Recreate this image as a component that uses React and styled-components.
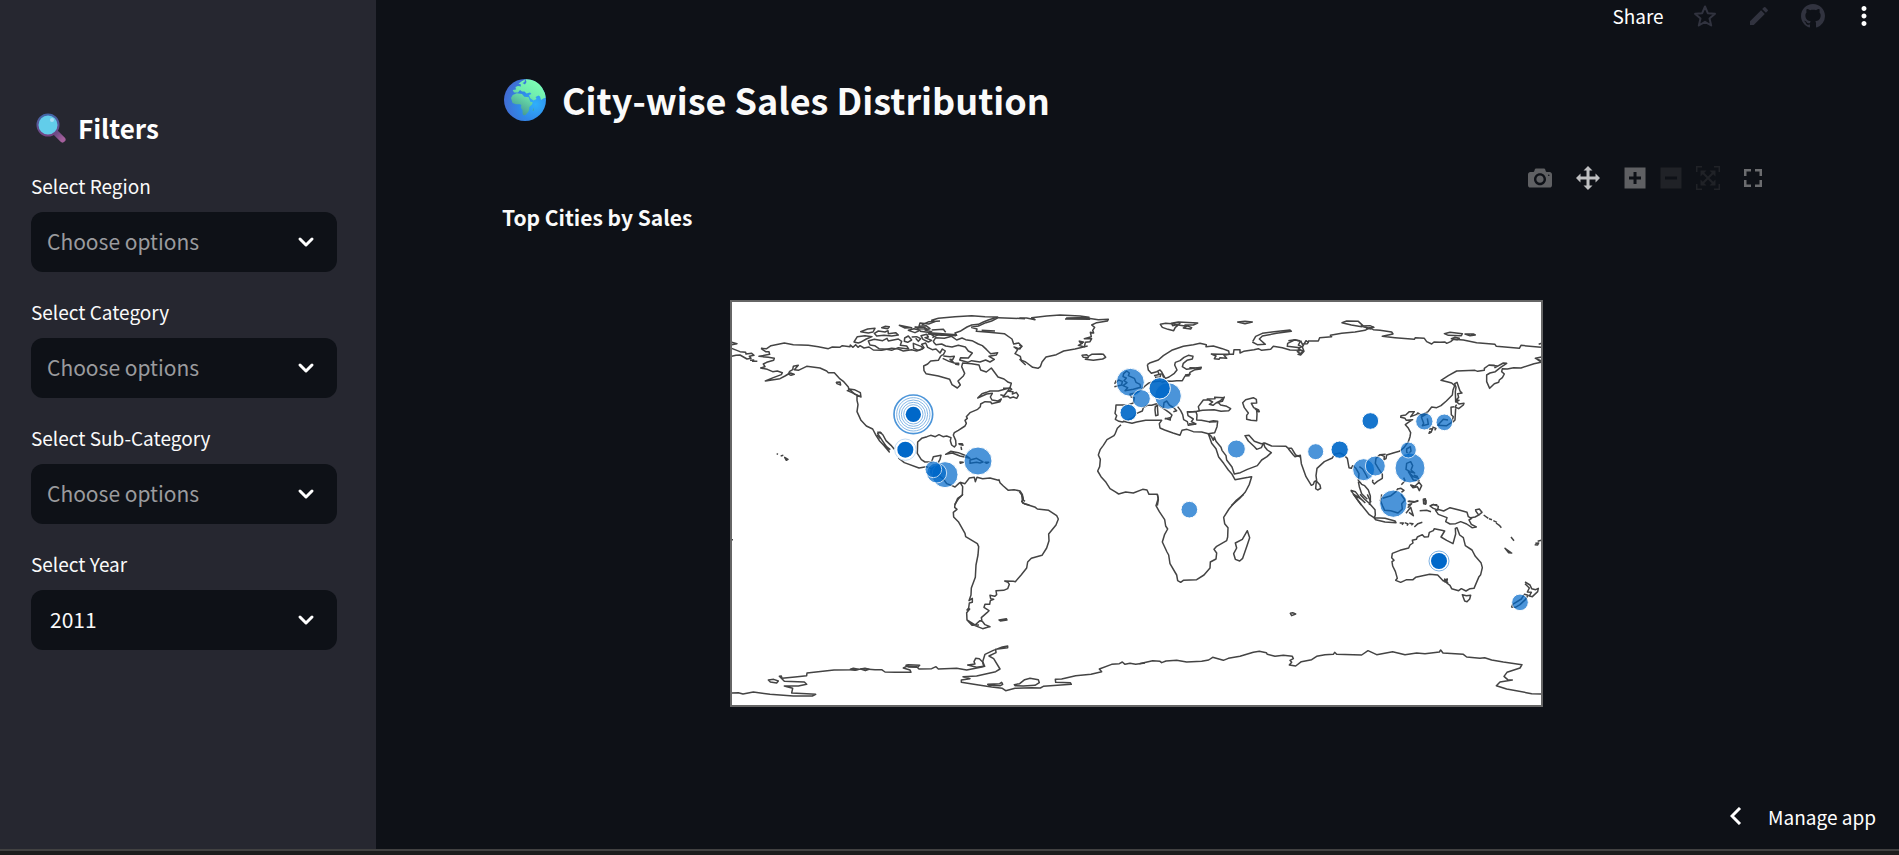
import React from "react";
import styled, { createGlobalStyle } from "styled-components";
import { MdEdit, MdMoreVert } from "react-icons/md";

const GlobalStyle = createGlobalStyle`
  *, *::before, *::after { box-sizing: border-box; }
  body {
    margin: 0;
    background: #0e1117;
    color: #fafafa;
    font-family: "Noto Sans CJK SC", "Noto Sans", sans-serif;
  }
`;

const Shell = styled.div`
  display: flex;
  flex-direction: column;
  min-height: 100vh;
`;

const Workspace = styled.div`
  display: flex;
  flex: 1;
`;

const StatusStrip = styled.div`
  height: 6px;
  background: #1c1c1c;
  border-top: 2px solid #414141;
`;

const Sidebar = styled.aside`
  flex: 0 0 376px;
  padding: 108px 39px 32px 31px;
  background: #262730;
`;

const SidebarTitle = styled.h2`
  display: flex;
  align-items: center;
  gap: 11px;
  margin: 0 0 24px;
  padding-left: 4px;
  font-size: 26px;
  line-height: 40px;
  font-weight: 600;
  color: #fff;
`;

const Field = styled.div`
  display: flex;
  flex-direction: column;
  gap: 12px;
  margin-bottom: 26px;
`;

const FieldLabel = styled.label`
  font-size: 19px;
  line-height: 28px;
  color: #fafafa;
`;

const SelectBox = styled.div`
  display: grid;
  grid-template-columns: 1fr 62px;
  align-items: center;

  svg {
    grid-area: 1 / 2;
    justify-self: center;
    pointer-events: none;
  }
`;

const Select = styled.select`
  grid-area: 1 / 1 / 2 / 3;
  appearance: none;
  width: 100%;
  height: 60px;
  margin: 0;
  padding: 0 60px 2px ${(p) => (p.$filled ? "19px" : "16px")};
  border: 0;
  border-radius: 12px;
  background: #0e1117;
  color: ${(p) => (p.$filled ? "#fafafa" : "#9a9b9e")};
  font-family: inherit;
  font-size: 21px;
`;

const Main = styled.main`
  flex: 1;
  min-width: 0;
  display: flex;
  flex-direction: column;
`;

const TopBar = styled.header`
  display: flex;
  justify-content: flex-end;
  align-items: center;
  height: 32px;
  padding-right: 11px;
`;

const ActionButton = styled.button`
  display: flex;
  align-items: center;
  justify-content: center;
  width: ${(p) => p.$width || 54}px;
  height: 32px;
  padding: 0;
  border: 0;
  background: none;
  color: ${(p) => (p.$dim ? "#31333f" : "#fff")};
  font-family: inherit;
  font-size: 19px;
`;

const ShareButton = styled(ActionButton)`
  width: 80px;
  padding-bottom: 2px;
`;

const Content = styled.div`
  flex: 1;
  display: flex;
  flex-direction: column;
  padding: 35px 128px 0 126px;
`;

const PageTitle = styled.h1`
  display: flex;
  align-items: center;
  gap: 16px;
  margin: 0;
  font-size: 36px;
  line-height: 64px;
  font-weight: 600;
`;

const ModeBar = styled.div`
  display: flex;
  justify-content: flex-end;
  align-items: center;
  margin-top: 35px;
  height: 24px;
  padding-right: 9px;
`;

const ModeGroup = styled.div`
  display: flex;
  align-items: center;
  gap: 14px;
  margin-left: 24px;
`;

const ModeButton = styled.button`
  display: flex;
  padding: 0;
  border: 0;
  background: none;
  color: ${(p) => p.$tone || "#5f6063"};
`;

const ChartTitle = styled.h3`
  margin: 11px 0 67px;
  font-size: 21px;
  line-height: 32px;
  font-weight: 700;
`;

const MapSvg = styled.svg`
  display: block;
  width: 100%;
  max-width: 813px;
  margin: 0 auto;
`;

const Footer = styled.footer`
  display: flex;
  justify-content: flex-end;
  padding: 11px 23px 15px;
`;

const ManageButton = styled.button`
  display: flex;
  align-items: center;
  gap: 26px;
  height: 36px;
  padding: 0;
  border: 0;
  background: none;
  color: #fff;
  font-family: inherit;
  font-size: 19px;
`;

function Chevron() {
  return (
    <svg width="18" height="12" viewBox="0 0 18 12" fill="none" aria-hidden="true">
      <path d="M3 3l6 6 6-6" stroke="#fff" strokeWidth="3" strokeLinecap="round" strokeLinejoin="round" />
    </svg>
  );
}

function MagnifierIcon() {
  return (
    <svg width="32" height="32" viewBox="0 0 32 32" aria-hidden="true">
      <defs>
        <linearGradient id="handle" x1="0" y1="0" x2="1" y2="1">
          <stop offset="0" stopColor="#6b4a82" />
          <stop offset="1" stopColor="#a45f9c" />
        </linearGradient>
        <linearGradient id="rim" x1="0" y1="0" x2="0" y2="1">
          <stop offset="0" stopColor="#4266a8" />
          <stop offset="1" stopColor="#754482" />
        </linearGradient>
      </defs>
      <path d="M21 21l6.500 6.500" stroke="url(#handle)" strokeWidth="6" strokeLinecap="round" />
      <circle cx="13" cy="13" r="10.500" fill="#62cdea" stroke="url(#rim)" strokeWidth="2" />
      <circle cx="17" cy="8" r="2" fill="#a9def5" />
    </svg>
  );
}

function GlobeIcon() {
  return (
    <svg width="44" height="44" viewBox="0 -1 44 44" aria-hidden="true">
      <defs>
        <radialGradient id="sea" cx="0.75" cy="0.6" r="0.8">
          <stop offset="0" stopColor="#2fb0fb" />
          <stop offset="0.500" stopColor="#3088e8" />
          <stop offset="1" stopColor="#4468cf" />
        </radialGradient>
        <linearGradient id="land" gradientUnits="userSpaceOnUse" x1="38" y1="4" x2="18" y2="38">
          <stop offset="0" stopColor="#7dffb4" />
          <stop offset="0.400" stopColor="#70ecae" />
          <stop offset="1" stopColor="#43928f" />
        </linearGradient>
      </defs>
      <circle cx="23" cy="22" r="21" fill="url(#sea)" />
      <path
        fill="url(#land)"
        d="M9 20L10.700 17 14.700 15.300 20 16 22.300 18.700 26.700 19.300 28.300 23.700 30.700 24.300 30 26.500 27.300 29 27 32 26.300 33.700 23.500 37Q21 38 20.700 36L20.500 32 19 30 19.300 27 18 26.300 14 26.300 10.500 25Z"
      />
      <path
        fill="url(#land)"
        d="M10.700 12L14 11.500 13.500 9 16 8 19 8.500 18.500 6 16.500 6 19 3.700 23 1.500 22.500 4 20.500 5 23 6.500 24.500 4 23.500 1.300Q34 1 40 9.500L43 15.500 43.500 20 41.700 20.300 39 22 38 18.500 36.500 17.500 33.500 19 34.500 21 31.500 22.500 28 20 27 17 29.500 16 28 14.500 24.500 15.500 22.500 13.500 20 13.500 18 12 16 14.500 12 14.500Z"
      />
      <path d="M32 29.500l-1.500 3.500 1.500-.5z" fill="#43a6a0" />
    </svg>
  );
}

function StarIcon() {
  return (
    <svg width="24" height="24" viewBox="0 0 24 24" fill="none" stroke="currentColor" strokeWidth="2" strokeLinejoin="round" aria-hidden="true">
      <path d="M12 2.500l2.800 6.700 7.200.6-5.500 4.700 1.700 7-6.200-3.700-6.200 3.700 1.700-7L2 9.800l7.200-.6z" />
    </svg>
  );
}

function GithubIcon() {
  return (
    <svg width="24" height="24" viewBox="0 0 16 16" fill="currentColor" aria-hidden="true">
      <path d="M8 0C3.580 0 0 3.580 0 8c0 3.540 2.290 6.530 5.470 7.590.4.070.55-.17.55-.38 0-.19-.01-.82-.01-1.490-2.010.37-2.530-.49-2.690-.94-.09-.23-.48-.94-.82-1.130-.28-.15-.68-.52-.01-.53.63-.01 1.080.58 1.230.82.72 1.210 1.870.87 2.330.66.07-.52.28-.87.51-1.070-1.780-.2-3.640-.89-3.640-3.950 0-.87.31-1.590.82-2.150-.08-.2-.36-1.020.08-2.120 0 0 .67-.21 2.200.82.64-.18 1.320-.27 2-.27s1.360.09 2 .27c1.530-1.040 2.200-.82 2.200-.82.44 1.100.16 1.920.08 2.120.51.56.82 1.270.82 2.150 0 3.070-1.870 3.750-3.650 3.950.29.25.54.73.54 1.480 0 1.070-.01 1.930-.01 2.200 0 .21.15.46.55.38A8.010 8.010 0 0 0 16 8c0-4.420-3.580-8-8-8z" />
    </svg>
  );
}

const MODE_ICONS = {
  camera: {
    w: 24,
    vw: 1000,
    d: "m500 450c-83 0-150-67-150-150 0-83 67-150 150-150 83 0 150 67 150 150 0 83-67 150-150 150z m400 150h-120c-16 0-34 13-39 29l-31 93c-6 15-23 28-40 28h-340c-16 0-34-13-39-28l-31-94c-6-15-23-28-40-28h-120c-55 0-100-45-100-100v-450c0-55 45-100 100-100h800c55 0 100 45 100 100v450c0 55-45 100-100 100z m-400-550c-138 0-250 112-250 250 0 138 112 250 250 250 138 0 250-112 250-250 0-138-112-250-250-250z m365 380c-19 0-35 16-35 35 0 19 16 35 35 35 19 0 35-16 35-35 0-19-16-35-35-35z",
  },
  pan: {
    w: 24,
    vw: 1000,
    d: "m1000 350l-187 188 0-125-250 0 0 250 125 0-188 187-187-187 125 0 0-250-250 0 0 125-188-188 186-187 0 125 252 0 0-250-125 0 187-188 188 188-125 0 0 250 250 0 0-126 187 188z",
  },
  plus: {
    w: 22,
    vw: 875,
    d: "m1 787l0-875 875 0 0 875-875 0z m687-500l-187 0 0-187-125 0 0 187-188 0 0 125 188 0 0 187 125 0 0-187 187 0 0-125z",
  },
  minus: {
    w: 22,
    vw: 875,
    d: "m0 788l0-876 876 0 0 876-876 0z m688-500l-500 0 0 125 500 0 0-125z",
  },
  reset: {
    w: 24,
    vw: 1000,
    d: "m250 850l-187 0-63 0 0-62 0-188 63 0 0 188 187 0 0 62z m688 0l-188 0 0-62 188 0 0-188 62 0 0 188 0 62-62 0z m-875-938l0 188-63 0 0-188 0-62 63 0 187 0 0 62-187 0z m875 188l0-188-188 0 0-62 188 0 62 0 0 62 0 188-62 0z m-125 188l-1 0-93-94-156 156 156 156 92-93 2 0 0 250-250 0 0-2 93-92-156-156-156 156 94 92 0 2-250 0 0-250 0 0 93 93 157-156-157-156-93 94 0 0 0-250 250 0 0 0-94 93 156 157 156-157-93-93 0 0 250 0 0 250z",
  },
};

function ModeIcon({ name }) {
  const icon = MODE_ICONS[name];
  return (
    <svg width={icon.w} height="24" viewBox={`0 0 ${icon.vw} 1000`} fill="currentColor" aria-hidden="true">
      <path d={icon.d} transform="matrix(1 0 0 -1 0 850)" />
    </svg>
  );
}

function FullscreenIcon() {
  return (
    <svg width="18" height="18" viewBox="0 0 18 18" fill="none" stroke="currentColor" strokeWidth="2.500" aria-hidden="true">
      <path d="M1.250 7V1.250H7M11 1.250h5.750V7M16.750 11v5.750H11M7 16.750H1.250V11" />
    </svg>
  );
}

/* Coastlines grouped by map section; each section has its own origin. */
const COASTS = [
  {
    id: "north-america",
    x: 0,
    y: 0,
    d: [
      "M20 142L36 146 20 149M20 160L45 170 62 172 63 177 80 175 87 181 73 184 78 190 66 192 45 180 33 181 20 184M75 196L86 195 83 199 97 199",
      "M108 160L125 161 138 152 178 144 205 149 250 151 280 155 310 161 322 156 344 157 352 152 375 155 376 150 384 157 392 149 399 157 405 152 417 159 432 156 445 165 470 166 500 160 520 162 535 168 560 164 575 168 590 163 597 158 590 148 602 144 608 157 622 164 633 162 645 174 652 162 661 168 655 179 648 182",
      "M648 182L640 196 617 198 608 207 596 213 597 227 603 236 640 243 674 253 681 269 697 279 706 270 699 258 715 243 719 235 710 215 713 204 740 206 762 210 767 225 784 231 799 219 819 246 837 252 850 262 859 265 855 278 820 288 795 288 784 292 771 296 758 309 785 297 802 295 796 306 801 315 819 318 829 312 825 320 800 326 797 321 780 320 767 327 766 335 758 343 735 353 724 365 727 370 720 376 724 385 720 393 700 406 688 413 685 420 692 436 693 450 688 456 680 450 676 437 678 428 665 423 654 425 642 419 631 425 617 421 606 425 590 430 578 441 577 475 589 494 600 501 620 500 625 485 648 481 645 493 640 502 645 514",
      "M108 160L122 170 132 170 134 178 102 184 130 187 148 190 146 196 125 202 115 207 120 215 107 219 127 223 143 230 157 228 172 233 169 239 145 248 121 258 165 251 180 243 190 237 194 229 203 224 205 214 220 211 208 224 220 226 245 214 285 219 305 228 310 233 328 233 343 250 355 259 370 276 372 285 367 287 381 293 405 304 396 304 396 316 399 329 396 350 408 376 424 393 443 402 453 421 464 438 476 451 493 471 487 459 470 434 458 416 465 411 474 420 483 437 498 451 508 463",
      "M520 489L538 503 582 519 604 515 625 523 640 527 642 542 655 552 665 566 681 572 690 576 705 562 M372 282L388 284 406 293 408 306 390 298zM334 262L345 261 347 270 336 266z M190 237L197 234 208 238 198 241z M457 411L470 415M455 420L466 430M478 450L496 464",
      "M387 141L397 125 420 122 441 125 424 132 406 142 400 144zM407 110L428 102 450 100 444 111 430 114zM448 115L460 108 480 111 489 107 490 116 512 113 520 120 500 123 477 121 455 123zM430 138L448 133 473 137 486 130 490 138 520 132 530 139 526 151 545 153 551 162 520 158 500 166 485 163 462 161 449 152 435 150zM539 129L550 123 560 135 548 142 538 139zM470 98L480 94 493 95 488 101zM523 91L545 95 560 98 540 99zM550 106L567 101 585 106 570 113z",
      "M560 126L575 125 587 131 580 139 572 130M565 145L588 154 595 160 580 166 566 160zM620 76L640 70 690 65 740 62 780 65 818 66 790 75 775 81 760 88 740 90 726 96 705 109 690 114 695 121 650 121 610 117 620 110 600 105 615 101 603 92 582 94 585 84 611 87 630 80zM588 122L605 118 610 126 600 128 620 136 610 141 594 133zM625 139L632 128 658 130 680 124 695 135 711 129 722 134 741 137 760 147 772 152 785 164 797 176 818 173 814 180 792 184 808 193 795 201 782 195 765 201 740 197 728 202 704 195 707 188 730 189 742 174 730 168 721 156 700 151 681 156 662 153 650 147 633 149 628 144z",
      "M570 96L598 97 606 102 580 101zM585 109L609 112 628 124M590 90L612 80 645 78M620 105L655 103 662 112M612 113L695 119M618 116L693 122M622 128L640 119M655 183L675 185 688 184 683 194 675 193 688 204 672 199 653 190M691 205L701 205 701 209 692 208z",
      "M738 97L760 93 783 83 800 78 820 68 900 71M738 97L756 102 754 109 792 112 838 116 861 132 866 147 881 144 890 153 885 162 867 156 878 164 870 176 886 184 889 198 902 210 M770 106L810 108",
      "M834 306L845 292 855 278 860 283 851 289 864 290 862 297 874 292 880 301 875 310 865 306 855 309 849 304z M834 280L848 280M826 299L840 303",
      "M662 478L677 469 700 473 725 483 735 490 705 483 682 474zM735 495L755 490 774 501 765 504 755 502 735 505zM705 501L715 502 706 505zM780 502L791 502 785 505z M700 446L712 446 714 451 702 448M708 455L710 465M155 476L159 478M167 483L175 481M179 487L189 493 184 496zM540 450L545 452",
      "M705 562L713 575 712 600 698 610 690 630M705 562L720 566 733 549 748 547 751 560 756 547 773 551 795 549 820 556 822 554 825 563 835 573 850 586 867 584 885 588 892 598 895 615 900 619",
    ],
  },
  {
    id: "europe-africa",
    x: 885,
    y: 0,
    d: [
      "M-2 69L20 69 45 74 35 68 80 63 120 60 180 63 207 67 175 68 140 69 205 70 235 74 265 73 262 78 230 83 215 90 224 97 218 106 221 114 211 112 214 125 193 131 215 131 210 140 196 142 193 156 175 151 187 145 178 142M203 153L165 162 131 168 109 179 78 186 66 201 61 215 54 220 38 217 17 201 -2 193M135 72L210 73M176 138L192 142M-2 150L6 154 -2 160",
      "M186 181L200 179 205 184 215 178 243 177 250 178 257 187 248 192 220 196 196 193 205 188 190 187z",
      "M421 88L437 85 455 86 458 92 480 86 466 97 461 107 444 103 427 97zM454 85L475 81 533 84 520 90 495 90 515 98 512 102 490 99 500 94 480 91zM653 81L675 79 697 81 675 86zM698 140L707 124 727 115 762 110 810 105 814 109 770 115 727 123 718 132 736 148 712 149 697 141M840 158L802 154 803 145 823 135 840 137M840 175L832 170 842 166",
      "M382 209L391 203 415 195 430 182 455 166 490 154 520 149 540 145 559 149 558 155 580 153 607 161 626 168 628 178 612 181 620 190 600 188 597 193 583 191 588 183 574 177 600 178 640 178 642 164 660 164 660 174 671 169 702 164 715 161 725 166 752 163 760 154 787 158 810 165 840 166",
      "M382 209L385 225 394 235 410 230 420 225 426 232 430 246 437 250 447 246 463 235 471 225 464 210 466 202 480 197 492 187 505 181 519 184 517 192 501 196 490 205 487 215 500 223 544 217 542 222 525 224 510 232 507 242 495 243 487 257 470 257 456 259 440 258 424 262M402 242L423 237 420 247 405 247M414 228L417 240M424 229L437 252M495 240L512 238M508 218L545 219",
      "M424 258L400 260 385 265 375 273 365 283 346 294 330 298 333 305 343 308 340 324 324 330 288 330 287 344 285 355 290 362 286 373 297 379 307 381 321 376 340 367 350 355 367 348 370 338 382 331 395 331 410 326 418 332 430 340 448 353 456 360 451 370M430 340L432 323 440 318 448 330 462 339 470 347 460 350M435 370L451 375 450 368 434 372M406 334L412 331 414 360 407 362 405 345z",
      "M473 335L482 347 488 359 491 374 502 380 505 391 528 387 514 380 520 372 504 362 502 350 528 350 531 360 530 375 544 376 567 380 580 377 593 379 591 395 584 413 565 416 545 411 520 410 501 403 486 406 480 421 459 414 434 405 420 399 418 386 425 376 415 376 377 376 350 381 336 385 309 379",
      "M505 352L538 348 535 335 550 315 567 315 578 321 568 328 579 331 588 324 600 318 613 306 607 319 594 322 602 330 620 334 632 341 626 347 603 349 582 344 548 346 530 349M560 312L585 311 584 307 612 308M507 386L528 388M567 381L590 380",
      "M668 323L677 314 700 308 709 313 710 324 694 325 701 338 716 345 718 350 710 348 711 357 710 377 693 376 680 373 680 361 685 354 673 338z M705 341L716 351",
      "M303 389L292 400 286 415 282 422 261 434 250 451 241 463 235 480 241 493 239 515 233 528 243 545 258 562 270 581 285 590 296 597 317 591 340 594 368 583 381 585 387 598 412 598 415 614 412 632",
      "M565 416L575 445 588 461 596 486 611 505 625 525 635 536 645 554 685 547 695 545 688 568 676 591 658 611 634 632M566 417L574 424 580 436 583 426 588 439 603 457 606 466 618 482 620 495 636 516 643 537 661 533 682 523 712 512 725 495 741 485 754 473 742 465 734 455 731 444 724 458 710 463 704 456 685 438 675 422 687 421 703 439 724 446 734 444 755 453 798 454 805 460 815 460 827 480 842 486",
      "M311 236L320 228 328 234 325 242 343 250 348 262 360 268 362 277 340 283 315 287 323 278 309 272 321 263 312 257 319 249 309 245zM283 266L296 255 307 259 305 270 283 275M285 258L292 260M-2 590L6 601 10 612 5 620 14 627 28 630",
    ],
  },
  {
    id: "asia",
    x: 1695,
    y: 0,
    d: [
      "M-5 137L15 134 31 139 25 150 35 155 25 162 39 168 32 175 24 178 32 180 42 169 37 156 48 137 55 142 52 146 35 147M32 137L38 150M54 138L85 138 89 128 125 125 121 121 155 115 195 111 225 106 240 98 250 104 270 106 305 111 309 117 277 124 315 128 373 133 376 128 403 130 410 140 425 147 432 141 450 142 465 141 470 145 482 140 490 133 520 135 560 143 615 148 619 154 688 160 693 151 753 157",
      "M156 83L170 78 205 79 218 91 215 95 184 90zM213 93L240 92 252 97 230 100 243 102zM463 116L480 112 517 116 514 122 475 121zM484 131L494 127 508 130 502 134zM525 117L550 117 556 120 540 122zM746 148L755 145",
      "M753 202L732 206 693 219 671 218 652 222 637 221 635 230 643 237 637 248 628 255 626 262 613 266 599 280 590 260 590 240 600 234 616 230 632 217 650 205 640 204 615 218 613 211 597 210 583 220 583 226 563 229 555 226 500 228 475 242 453 256 474 261 485 264 494 272 489 285 487 300 469 318 453 332 440 338 425 336 413 351M600 211L623 213M753 197L736 190 755 186M738 190L754 202",
      "M501 262L510 288 516 294 503 296 506 307 499 315 507 316 497 321 496 290 498 277 494 266zM499 320L507 327 522 325 520 330 506 341 495 336 500 329M492 335L483 337 484 359 490 365 485 380M497 340L495 375 488 382",
      "M413 351L394 360 383 354 380 358 362 365 373 350 358 350 347 360 333 362 332 367 345 370 349 376 368 374 355 382 346 389 354 398 362 413 360 425 355 440 342 458 328 469 312 473 290 480 288 491 282 494 283 484 270 479 258 490 256 505 265 520 277 538 277 550 262 559 253 567 247 560M413 355L394 366 401 385 397 392 415 388 412 370M417 402L428 401 423 412 417 415 420 408M427 396L438 400 434 406M442 391L470 392 485 382M444 390L460 373 474 375",
      "M-5 461L10 480 15 485 31 481 34 506 48 545 64 571 70 568 73 560 80 556 78 542 81 520 103 500 127 489 133 478 150 474 161 480 172 490 177 518 184 520 188 512 197 519 207 536 205 556 215 568 224 572 235 585 241 603 241 617 238 630M79 558L90 570 92 580 83 585 77 581zM270 479L287 478M208 515L218 522 230 543 232 549M205 560L208 575 215 596 232 613M182 586L196 590 212 611 226 624M182 586L192 599 205 618 214 630M188 596L213 612M247 560L249 554",
      "M350 462L361 455 363 468 355 478 350 471zM350 505L362 500 368 512 363 525 374 534 360 530 348 523zM355 530L370 545 385 550 387 557 370 555zM371 540L384 545M341 548L345 557 334 569M323 582L333 580 342 586 334 592M362 570L375 574 387 562 395 572 388 587 382 575 369 578zM278 610L303 602 318 590 324 580 M356 618L375 620 385 616M402 613L408 616 408 625 401 626 402 615M425 629L442 629",
    ],
  },
  {
    id: "south-america-antarctica",
    x: 0,
    y: 600,
    d: [
      "M714 -2L700 12 690 27 689 37 696 43 685 52 686 66 700 80 720 115 722 125 757 146 761 155 759 180 753 210 751 247 739 279 738 300 732 317 742 310 742 322 733 324 731 339 726 345 734 342 725 353 726 375 733 379 750 390 765 377 771 379 769 368 786 353 792 347 777 337 780 328 794 328 796 317 806 313 797 311 795 301 809 304 815 299 813 287 836 286 848 281 853 268 849 262 839 258 865 259 871 260 889 239 905 219 908 201 919 190 951 181 965 159 972 137 971 117 993 90 1000 72 995 62 971 46 937 42 931 37 910 30 893 24 890 -2M733 379L741 388 773 401 790 396 795 395 780 389 773 380 765 377M728 377L741 391 762 390M822 375L844 371 846 375 826 378z",
      "M20 594L40 593 54 597 85 591 135 598 205 603 262 603 272 598 245 596 200 594 203 580 178 573 220 573 245 568 238 561 178 559 163 544 169 543 171 550 210 546 245 542 246 534 327 525 395 524 412 521 450 524 470 524 480 531 510 532 558 532 555 525 535 519 545 514 575 515 582 522 620 521 633 515 640 522 695 520 725 525 767 517 779 514 773 500 780 478 805 466 832 456 848 453 848 458 812 463 813 473 792 483 806 491 825 522 812 530 755 543 714 545 735 551 709 555 709 562 756 569 800 576 832 580 842 587 870 580 920 578 946 579 955 574 1039 568 1036 563 992 562 991 553 1010 552 1052 542 1098 538 1130 530 1123 522 1160 508 1183 506 1192 501 1200 508 1215 505 1232 508 1260 504",
      "M130 555L146 553 160 558 155 564 136 561zM376 523L385 520 400 523 390 526zM407 522L420 520 432 523 421 527zM543 511L550 509 584 511 578 517 552 516zM728 510L750 507 747 500 752 490 763 491 773 501 776 514 755 517zM788 568L824 566 830 562 833 568 826 572 792 571zM868 569L884 566 899 554 915 550 940 554 943 563 930 571 895 573 870 572zM20 134L24 134",
    ],
  },
  {
    id: "indian-ocean",
    x: 1245,
    y: 600,
    d: [
      "M52 -2L55 10 48 32 58 50 74 74 77 93 83 102 74 118 67 141 81 171 86 180 90 206 110 240 113 257 122 262 130 256 170 254 192 240 210 219 211 201 228 192 230 174 222 163 230 154 260 137 263 126 264 98 254 86 251 67 267 42 289 16 311 -2",
      "M322 107L329 128 321 152 308 190 299 198 286 193 281 176 290 159 286 144 307 133zM451 355L458 353 467 357 455 362z",
      "M640 -2L662 27 688 59 702 68 707 74 735 81 768 83 765 78 735 70 703 68 706 60 705 44 687 24 673 12 660 -2M682 -2L693 22M725 -2L724 10 721 16 728 33 734 46 752 47 774 54 787 42 785 26 795 15 783 -2M803 19L820 22 835 18M803 38L815 26 803 30M798 55L812 37 820 62 807 52M850 13L856 11 857 28 851 25zM839 47L860 46 873 50M870 33L880 28 895 34 893 45 880 40zM779 84L790 84 786 89M794 83L804 87 801 92M808 85L819 86 814 91M823 96L834 86 847 82",
      "M893 43L911 48 930 38 960 46 981 52 985 65 995 70 987 75 994 88 1009 96 996 98 980 87 962 80 947 86 930 87 917 80 921 68 895 58 887 47zM989 69L1005 66 1020 58M1005 45L1018 42 1026 52 1016 60 1006 46M1031 60L1045 70M1047 71L1056 74M1060 77L1071 82M1068 84L1078 91 1084 98M1113 126L1122 137M1095 160L1115 174 1106 173zM1186 145L1196 144 1193 150 1184 149M1193 139L1204 136",
      "M806 159L810 150 819 144 817 136 829 133 832 126 847 119 853 126 865 125 868 112 880 107 883 101 905 106 914 108 903 126 920 136 939 146 947 117 946 100 951 98 959 120 970 128 976 152 996 165 1006 184 1023 203 1027 218 1022 239 1017 245 1002 280 990 281 978 288 964 281 956 287 935 281 930 271 920 264 922 252 910 258 893 240 869 238 827 247 819 254 800 254 782 262 767 256 772 250 766 229 758 213 756 200 762 196 755 188 757 175 780 166 806 159zM967 299L979 302 992 301 989 312 981 320 974 318z M914 252L923 263 914 260z",
      "M1155 261L1170 270 1175 281 1187 284 1195 280 1193 290 1177 305 1168 303 1174 292 1162 291 1168 279 1155 266M1153 298L1164 301 1156 314 1140 329 1126 337 1115 336 1118 328 1144 312z",
      "M-2 506L38 497 60 499 65 503 78 498 110 496 140 501 185 499 206 495 218 487 250 496 265 490 300 484 340 472 358 469 379 473 382 478 405 484 430 481 457 484 460 491 450 496 455 502 448 510 467 513 484 500 515 494 530 484 555 479 580 478 584 472 590 478 665 480 684 467 710 479 758 470 795 479 830 474 855 476 898 471 902 465 909 474 970 478 980 486 1020 490 1034 488 1055 495 1090 501 1146 509 1140 519 1101 532 1092 544 1103 554 1117 555 1080 561 1069 572 1100 582 1159 593 1175 596 1204 597",
    ],
  },
];

/* City bubbles: centre and radius in map units. */
const BUBBLES = [
  [759, 498, 42], [660, 539, 39], [635, 534, 30], [625, 523, 25],
  [1216, 262, 42], [1329, 303, 40], [1304, 280, 32], [1304, 280, 32], [1249, 311, 27],
  [1210, 353, 25], [1210, 353, 25], [1534, 462, 27], [1393, 644, 25],
  [1936, 378, 25], [1936, 378, 25], [1844, 464, 26], [1844, 464, 26], [1772, 470, 24],
  [1916, 524, 33], [1951, 513, 30], [2055, 519, 45], [2050, 465, 24], [2098, 379, 26],
  [2158, 382, 25], [2005, 626, 41], [2385, 922, 25],
];

/* Cities with many stacked bubbles, drawn as rings round a solid core. */
const CLUSTERS = [
  { x: 565, y: 358, core: 23, halo: 58, ringColor: "#86b8e6", rings: [50, 43, 36, 29] },
  { x: 541, y: 464, core: 24, ringColor: "#c4dcf3", rings: [28, 32] },
  { x: 2142, y: 798, core: 24, ringColor: "#7fb3e4", rings: [30] },
  { x: 633, y: 530, core: 18, rings: [] },
];

function WorldMap() {
  return (
    <MapSvg viewBox="15 15 2439 1221" role="img" aria-label="Top Cities by Sales">
      <rect x="18" y="18" width="2433" height="1215" fill="#fff" />
      {COASTS.map((section) => (
        <g key={section.id} transform={`translate(${section.x} ${section.y})`} fill="none" stroke="#444" strokeWidth="4.500" strokeLinejoin="round">
          {section.d.map((d) => (
            <path key={d} d={d} />
          ))}
        </g>
      ))}
      {CLUSTERS.map((c) => (
        <g key={c.x}>
          {c.halo && <circle cx={c.x} cy={c.y} r={c.halo} fill="#fff" stroke="#4c95d9" strokeWidth="5" />}
          {c.rings.map((r) => (
            <circle key={r} cx={c.x} cy={c.y} r={r} fill="#fff" stroke={c.ringColor} strokeWidth="3" />
          ))}
          <circle cx={c.x} cy={c.y} r={c.core} fill="#0068c9" />
        </g>
      ))}
      {BUBBLES.map(([x, y, r], i) => (
        <circle key={i} cx={x} cy={y} r={r} fill="#0068c9" stroke="#fff" strokeWidth="3" opacity="0.7" />
      ))}
      <rect x="18" y="18" width="2433" height="1215" fill="none" stroke="#666" strokeWidth="6" />
    </MapSvg>
  );
}

const FILTERS = [
  { id: "region", label: "Select Region", value: "Choose options" },
  { id: "category", label: "Select Category", value: "Choose options" },
  { id: "sub-category", label: "Select Sub-Category", value: "Choose options" },
  { id: "year", label: "Select Year", value: "2011", filled: true },
];

export default function App() {
  return (
    <Shell>
      <GlobalStyle />
      <Workspace>
        <Sidebar>
          <SidebarTitle>
            <MagnifierIcon />
            Filters
          </SidebarTitle>
          {FILTERS.map((f) => (
            <Field key={f.id}>
              <FieldLabel htmlFor={f.id}>{f.label}</FieldLabel>
              <SelectBox>
                <Select id={f.id} $filled={f.filled}>
                  <option>{f.value}</option>
                </Select>
                <Chevron />
              </SelectBox>
            </Field>
          ))}
        </Sidebar>
        <Main>
          <TopBar>
            <ShareButton>Share</ShareButton>
            <ActionButton $dim aria-label="Favorite"><StarIcon /></ActionButton>
            <ActionButton $dim aria-label="Edit source"><MdEdit size={24} /></ActionButton>
            <ActionButton $dim aria-label="View on GitHub"><GithubIcon /></ActionButton>
            <ActionButton $width={48} aria-label="Main menu"><MdMoreVert size={30} /></ActionButton>
          </TopBar>
          <Content>
            <PageTitle>
              <GlobeIcon />
              City-wise Sales Distribution
            </PageTitle>
            <ModeBar>
              <ModeGroup>
                <ModeButton aria-label="Download plot as a png"><ModeIcon name="camera" /></ModeButton>
              </ModeGroup>
              <ModeGroup>
                <ModeButton $tone="#bfc0c2" aria-label="Pan"><ModeIcon name="pan" /></ModeButton>
              </ModeGroup>
              <ModeGroup>
                <ModeButton aria-label="Zoom in"><ModeIcon name="plus" /></ModeButton>
                <ModeButton $tone="#202227" aria-label="Zoom out"><ModeIcon name="minus" /></ModeButton>
                <ModeButton $tone="#202227" aria-label="Reset"><ModeIcon name="reset" /></ModeButton>
              </ModeGroup>
              <ModeGroup>
                <ModeButton $tone="#6b6c6f" aria-label="Fullscreen"><FullscreenIcon /></ModeButton>
              </ModeGroup>
            </ModeBar>
            <ChartTitle>Top Cities by Sales</ChartTitle>
            <WorldMap />
          </Content>
          <Footer>
            <ManageButton>
              <svg width="12" height="18" viewBox="0 0 12 18" fill="none" aria-hidden="true">
                <path d="M10 1L2 9l8 8" stroke="#fff" strokeWidth="3" />
              </svg>
              Manage app
            </ManageButton>
          </Footer>
        </Main>
      </Workspace>
      <StatusStrip />
    </Shell>
  );
}
